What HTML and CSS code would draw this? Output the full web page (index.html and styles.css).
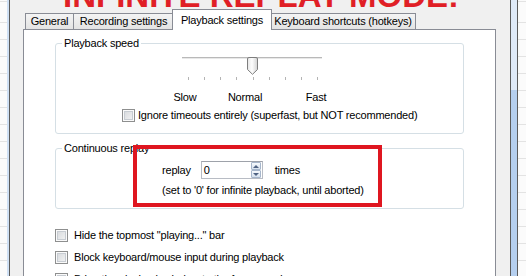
FILE: index.html
```html
<!DOCTYPE html>
<html>
<head>
<meta charset="utf-8">
<link rel="stylesheet" href="styles.css">
</head>
<body>
<div class="screen">
  <div class="side side-left">
    <div class="grid"></div>
    <div class="bar"></div>
    <div class="edge"></div>
  </div>
  <div class="main">
    <div class="title"><span>INFINITE REPLAY MODE!</span></div>
    <div class="tabs">
      <div class="tab tab-general">General</div>
      <div class="tab tab-recording">Recording settings</div>
      <div class="tab tab-playback active">Playback settings</div>
      <div class="tab tab-keyboard">Keyboard shortcuts (hotkeys)</div>
    </div>
    <div class="panel">
      <fieldset class="group group-speed">
        <legend>Playback speed</legend>
        <div class="slider">
          <div class="track"></div>
          <svg class="thumb" width="11" height="18" viewBox="0 0 11 18">
            <defs>
              <linearGradient id="tg" x1="0" y1="0" x2="1" y2="0">
                <stop offset="0" stop-color="#e6e6e6"/>
                <stop offset="0.45" stop-color="#fdfdfd"/>
                <stop offset="1" stop-color="#d2d2d2"/>
              </linearGradient>
            </defs>
            <path d="M2 0.5 H9 Q10.5 0.5 10.5 2 V12.5 L5.5 17.3 L0.5 12.5 V2 Q0.5 0.5 2 0.5 Z" fill="url(#tg)" stroke="#7e7e7e"/>
          </svg>
        </div>
        <div class="ticks"><i></i><i></i><i></i><i></i><i></i><i></i><i></i><i></i><i></i></div>
        <div class="speed-labels">
          <span class="lbl-slow">Slow</span>
          <span class="lbl-normal">Normal</span>
          <span class="lbl-fast">Fast</span>
        </div>
        <label class="check check-ignore"><span class="box"></span>Ignore timeouts entirely (superfast, but NOT recommended)</label>
      </fieldset>
      <fieldset class="group group-replay">
        <legend>Continuous replay</legend>
        <div class="replay-row">
          <span>replay</span>
          <div class="spin">
            <span class="spin-value">0</span>
            <div class="spin-buttons">
              <span class="spin-btn"><i class="arrow-up"></i></span>
              <span class="spin-btn"><i class="arrow-down"></i></span>
            </div>
          </div>
          <span class="times">times</span>
        </div>
        <div class="replay-note">(set to '0' for infinite playback, until aborted)</div>
      </fieldset>
      <div class="options">
        <label class="check"><span class="box"></span>Hide the topmost "playing..." bar</label>
        <label class="check"><span class="box"></span>Block keyboard/mouse input during playback</label>
        <label class="check"><span class="box"></span>Bring the playback window to the foreground</label>
      </div>
      <div class="highlight"></div>
    </div>
  </div>
  <div class="side side-right">
    <div class="edge"></div>
    <div class="bar"></div>
    <div class="edge"></div>
    <div class="grid"></div>
  </div>
</div>
</body>
</html>
```

FILE: styles.css
```css
* { box-sizing: border-box; }

html, body {
  margin: 0;
  padding: 0;
  width: 526px;
  height: 276px;
  overflow: hidden;
  background: #f0f0f0;
}

body {
  font-family: "Liberation Sans", Arial, sans-serif;
  font-size: 11px;
  letter-spacing: -0.2px;
  color: #000;
}

.screen {
  display: flex;
  width: 526px;
  height: 276px;
}

/* side strips */
.side {
  display: flex;
  height: 276px;
}
.side-left { width: 10px; }
.side-right { width: 16px; }

.grid {
  background: repeating-linear-gradient(to bottom, #fbfbfb 0 16px, #e3e3e3 16px 17px);
  background-position: 0 6px;
}
.side-left .grid { width: 7px; }
.side-right .grid { width: 8px; }

.bar { height: 100%; }
.side-left .bar { width: 2px; background: #cfe0f4; }
.side-right .bar {
  width: 6px;
  background: linear-gradient(to bottom, #dfeaf8 0 90px, #b5cfef 90px);
}

.edge { width: 1px; background: #5b5b5b; }

/* main area */
.main {
  width: 500px;
  height: 276px;
  display: flex;
  flex-direction: column;
  overflow: hidden;
  padding-left: 13px;
}

.title {
  height: 9px;
  overflow: hidden;
  padding-left: 40px;
  flex: none;
}
.title span {
  display: block;
  margin-top: -21px;
  font-size: 33px;
  line-height: 33px;
  font-weight: bold;
  letter-spacing: 0;
  color: #e01f26;
  white-space: nowrap;
}

/* tabs */
.tabs {
  display: flex;
  align-items: flex-end;
  height: 20px;
  padding-left: 2px;
  flex: none;
}
.tab {
  height: 16px;
  line-height: 15px;
  text-align: center;
  white-space: nowrap;
  border: 1px solid #898c95;
  border-bottom: none;
  background: linear-gradient(to bottom, #f4f4f4, #e3e3e3);
}
.tab-general { width: 49px; }
.tab-recording { width: 101px; margin-left: -1px; }
.tab-playback { width: 100px; margin-left: -2px; }
.tab-keyboard { width: 146px; margin-left: -2px; }

.tab.active {
  height: 21px;
  margin-bottom: -1px;
  padding-top: 3px;
  background: #fff;
  position: relative;
  z-index: 2;
}

/* panel */
.panel {
  position: relative;
  width: 473px;
  height: 260px;
  flex: none;
  background: #fff;
  border: 1px solid #898c95;
  padding: 7px 31px 0 31px;
}

.group {
  margin: 0;
  padding: 0 0 11px 0;
  min-width: 0;
  border: 1px solid #d5dfe5;
  border-radius: 3px;
}
.group legend {
  margin-left: 6px;
  padding: 0 2px;
  line-height: 13px;
  height: 13px;
}
.group-replay { margin-top: 8px; }

/* slider */
.slider {
  position: relative;
  width: 140px;
  height: 18px;
  margin-top: 5px;
  margin-left: 126px;
}
.track {
  margin-top: 7px;
  height: 2px;
  border-top: 1px solid #b9b9b9;
  background: #e8e8e8;
}
.thumb {
  position: absolute;
  top: 0;
  left: 65px;
  display: block;
}
.ticks {
  display: flex;
  justify-content: space-between;
  width: 130px;
  height: 3px;
  margin-top: 2px;
  margin-left: 132px;
}
.ticks i {
  display: block;
  width: 1px;
  height: 3px;
  background: #b4b4b4;
}

.speed-labels {
  display: flex;
  height: 13px;
  line-height: 13px;
  margin-top: 11px;
  padding-left: 104px;
}
.speed-labels span {
  width: 50px;
  text-align: center;
}
.lbl-normal { margin-left: 10px; }
.lbl-fast { margin-left: 21px; }

/* checkbox */
.check {
  display: flex;
  align-items: center;
  height: 13px;
  line-height: 13px;
  white-space: nowrap;
}
.check .box {
  flex: none;
  width: 13px;
  height: 13px;
  margin-right: 6px;
  border: 1px solid #8e8f8f;
  background: linear-gradient(135deg, #d3d6da 0%, #f6f6f6 100%);
  box-shadow: inset 0 0 0 1px #fafafa, inset 0 0 0 2px #c7ccd2;
}
.check-ignore {
  margin-top: 5px;
  margin-left: 66px;
}
.check-ignore .box { margin-right: 3px; }

/* replay */
.replay-row {
  display: flex;
  align-items: center;
  height: 18px;
  margin-top: 6px;
  margin-left: 106px;
}
.spin {
  display: flex;
  width: 62px;
  height: 18px;
  margin-left: 10px;
  border: 1px solid #b8bcc4;
  border-top-color: #9ea2aa;
  background: #fff;
}
.spin-value {
  flex: 1;
  padding-left: 2px;
  line-height: 16px;
}
.spin-buttons {
  display: flex;
  flex-direction: column;
  width: 11px;
  padding-right: 1px;
}
.spin-btn {
  flex: 1;
  display: flex;
  align-items: center;
  justify-content: center;
  border: 1px solid #a6b6cb;
  border-radius: 1px;
  background: linear-gradient(to bottom, #f6f9fc, #d6e1ee);
}
.arrow-up, .arrow-down {
  display: block;
  width: 0;
  height: 0;
  border-left: 3px solid transparent;
  border-right: 3px solid transparent;
}
.arrow-up { border-bottom: 3px solid #4f6282; }
.arrow-down { border-top: 3px solid #4f6282; }
.times { margin-left: 12px; }

.replay-note {
  height: 13px;
  line-height: 13px;
  margin-top: 5px;
  margin-left: 106px;
  white-space: nowrap;
}

/* options */
.options {
  display: flex;
  flex-direction: column;
  gap: 9px;
  margin-top: 20px;
}

/* red annotation frame */
.highlight {
  position: absolute;
  left: 109px;
  top: 115px;
  width: 249px;
  height: 62px;
  border: 4px solid #df1620;
  pointer-events: none;
}
```
